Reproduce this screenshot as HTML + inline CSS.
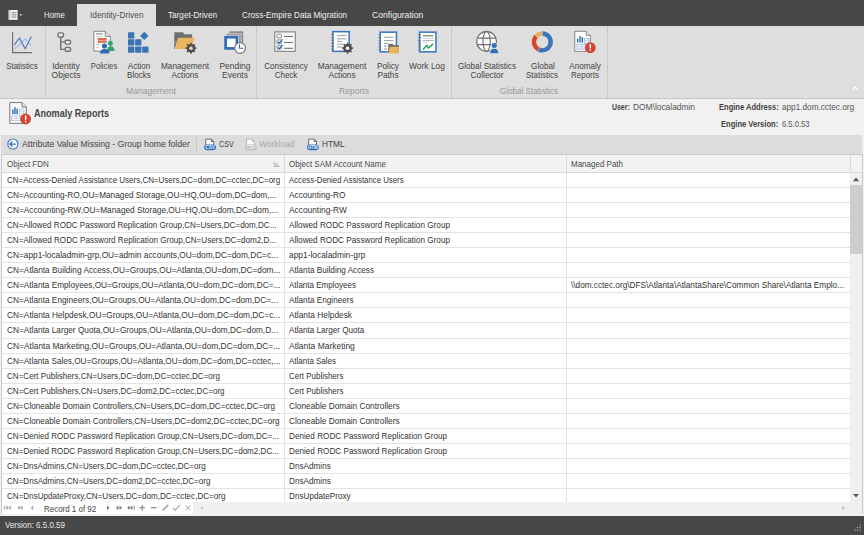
<!DOCTYPE html>
<html><head><meta charset="utf-8"><style>
html,body{margin:0;padding:0;width:864px;height:535px;overflow:hidden;background:#f1f1f1;}
body{position:relative;font-family:"Liberation Sans",sans-serif;}
.t{position:absolute;white-space:nowrap;line-height:1;}
.r{position:absolute;}
svg{position:absolute;left:0;top:0;}
</style></head><body>
<div class="r" style="left:0px;top:0px;width:864px;height:26px;background:#474747;"></div>
<div class="r" style="left:77px;top:4px;width:79px;height:22px;background:#dedede;"></div>
<div class="r" style="left:0px;top:26px;width:864px;height:72px;background:#dedede;"></div>
<div class="r" style="left:0px;top:98px;width:864px;height:1px;background:#c6c6c6;"></div>
<div class="r" style="left:45px;top:26px;width:1px;height:72px;background:#c9c9c9;"></div>
<div class="r" style="left:256px;top:26px;width:1px;height:72px;background:#c9c9c9;"></div>
<div class="r" style="left:451px;top:26px;width:1px;height:72px;background:#c9c9c9;"></div>
<div class="r" style="left:607px;top:26px;width:1px;height:72px;background:#c9c9c9;"></div>
<div class="r" style="left:1px;top:135px;width:861px;height:19px;background:#dcdcdc;"></div>
<div class="r" style="left:196px;top:137px;width:1px;height:15px;background:#c8c8c8;"></div>
<div class="r" style="left:1px;top:154px;width:862px;height:361px;background:#ffffff;box-sizing:border-box;border:1px solid #c9c9c9;"></div>
<div class="r" style="left:2px;top:155px;width:860px;height:17px;background:#f2f2f2;"></div>
<div class="r" style="left:2px;top:172px;width:860px;height:1px;background:#d9d9d9;"></div>
<div class="r" style="left:284px;top:155px;width:1px;height:17px;background:#d9d9d9;"></div>
<div class="r" style="left:566px;top:155px;width:1px;height:17px;background:#d9d9d9;"></div>
<div class="r" style="left:850px;top:155px;width:1px;height:17px;background:#d9d9d9;"></div>
<div class="r" style="left:850px;top:173px;width:12px;height:329px;background:#f0f0f0;"></div>
<div class="r" style="left:850px;top:185px;width:12px;height:69px;background:#cdcdcd;"></div>
<div class="r" style="left:193px;top:502px;width:669px;height:12px;background:#f0f0f0;"></div>
<div class="r" style="left:0px;top:514px;width:864px;height:2px;background:#f1f1f1;"></div>
<div class="r" style="left:0px;top:516px;width:864px;height:19px;background:#474747;"></div>
<div class="t" style="top:11px;font-size:8.6px;color:#f0f0f0;left:44.00px;transform-origin:0 0;transform:scaleX(0.9155);">Home</div>
<div class="t" style="top:11px;font-size:8.6px;color:#505050;left:90.00px;transform-origin:0 0;transform:scaleX(0.9656);">Identity-Driven</div>
<div class="t" style="top:11px;font-size:8.6px;color:#f0f0f0;left:168.20px;transform-origin:0 0;transform:scaleX(0.9497);">Target-Driven</div>
<div class="t" style="top:11px;font-size:8.6px;color:#f0f0f0;left:242.00px;transform-origin:0 0;transform:scaleX(0.9477);">Cross-Empire Data Migration</div>
<div class="t" style="top:11px;font-size:8.6px;color:#f0f0f0;left:372.00px;transform-origin:0 0;transform:scaleX(1.0034);">Configuration</div>
<div class="t" style="top:62px;font-size:8.6px;color:#444444;left:-127.70px;width:300px;text-align:center;transform:scaleX(0.9130);">Statistics</div>
<div class="t" style="top:62px;font-size:8.6px;color:#444444;left:-83.75px;width:300px;text-align:center;transform:scaleX(0.9921);">Identity</div>
<div class="t" style="top:71px;font-size:8.6px;color:#444444;left:-83.75px;width:300px;text-align:center;transform:scaleX(0.9921);">Objects</div>
<div class="t" style="top:62px;font-size:8.6px;color:#444444;left:-46.25px;width:300px;text-align:center;transform:scaleX(0.8945);">Policies</div>
<div class="t" style="top:62px;font-size:8.6px;color:#444444;left:-11.25px;width:300px;text-align:center;transform:scaleX(0.9418);">Action</div>
<div class="t" style="top:71px;font-size:8.6px;color:#444444;left:-11.25px;width:300px;text-align:center;transform:scaleX(0.9418);">Blocks</div>
<div class="t" style="top:62px;font-size:8.6px;color:#444444;left:35.00px;width:300px;text-align:center;transform:scaleX(0.9567);">Management</div>
<div class="t" style="top:71px;font-size:8.6px;color:#444444;left:35.00px;width:300px;text-align:center;transform:scaleX(0.9567);">Actions</div>
<div class="t" style="top:62px;font-size:8.6px;color:#444444;left:84.50px;width:300px;text-align:center;transform:scaleX(0.9827);">Pending</div>
<div class="t" style="top:71px;font-size:8.6px;color:#444444;left:84.50px;width:300px;text-align:center;transform:scaleX(0.9827);">Events</div>
<div class="t" style="top:62px;font-size:8.6px;color:#444444;left:135.75px;width:300px;text-align:center;transform:scaleX(0.9292);">Consistency</div>
<div class="t" style="top:71px;font-size:8.6px;color:#444444;left:135.75px;width:300px;text-align:center;transform:scaleX(0.9292);">Check</div>
<div class="t" style="top:62px;font-size:8.6px;color:#444444;left:191.75px;width:300px;text-align:center;transform:scaleX(0.9667);">Management</div>
<div class="t" style="top:71px;font-size:8.6px;color:#444444;left:191.75px;width:300px;text-align:center;transform:scaleX(0.9667);">Actions</div>
<div class="t" style="top:62px;font-size:8.6px;color:#444444;left:237.50px;width:300px;text-align:center;transform:scaleX(0.9591);">Policy</div>
<div class="t" style="top:71px;font-size:8.6px;color:#444444;left:237.50px;width:300px;text-align:center;transform:scaleX(0.9591);">Paths</div>
<div class="t" style="top:62px;font-size:8.6px;color:#444444;left:276.55px;width:300px;text-align:center;transform:scaleX(0.9802);">Work Log</div>
<div class="t" style="top:62px;font-size:8.6px;color:#444444;left:337.25px;width:300px;text-align:center;transform:scaleX(0.9396);">Global Statistics</div>
<div class="t" style="top:71px;font-size:8.6px;color:#444444;left:337.40px;width:300px;text-align:center;transform:scaleX(0.9728);">Collector</div>
<div class="t" style="top:62px;font-size:8.6px;color:#444444;left:392.50px;width:300px;text-align:center;transform:scaleX(0.9580);">Global</div>
<div class="t" style="top:71px;font-size:8.6px;color:#444444;left:392.35px;width:300px;text-align:center;transform:scaleX(0.9334);">Statistics</div>
<div class="t" style="top:62px;font-size:8.6px;color:#444444;left:434.55px;width:300px;text-align:center;transform:scaleX(0.9421);">Anomaly</div>
<div class="t" style="top:71px;font-size:8.6px;color:#444444;left:434.70px;width:300px;text-align:center;transform:scaleX(0.9238);">Reports</div>
<div class="t" style="top:87px;font-size:8.6px;color:#999999;left:0.90px;width:300px;text-align:center;transform:scaleX(0.9966);">Management</div>
<div class="t" style="top:87px;font-size:8.6px;color:#999999;left:203.50px;width:300px;text-align:center;transform:scaleX(0.9966);">Reports</div>
<div class="t" style="top:87px;font-size:8.6px;color:#999999;left:378.80px;width:300px;text-align:center;transform:scaleX(0.9460);">Global Statistics</div>
<div class="t" style="top:109px;font-size:10.0px;color:#444444;font-weight:700;left:34.00px;transform-origin:0 0;transform:scaleX(0.9058);">Anomaly Reports</div>
<div class="t" style="top:103px;font-size:8.4px;color:#444444;font-weight:700;left:611.60px;transform-origin:0 0;transform:scaleX(0.8263);">User:</div>
<div class="t" style="top:103px;font-size:8.6px;color:#555555;left:633.40px;transform-origin:0 0;transform:scaleX(0.9759);">DOM\localadmin</div>
<div class="t" style="top:103px;font-size:8.4px;color:#444444;font-weight:700;left:718.50px;transform-origin:0 0;transform:scaleX(0.9011);">Engine Address:</div>
<div class="t" style="top:103px;font-size:8.6px;color:#555555;left:782.00px;transform-origin:0 0;transform:scaleX(0.9538);">app1.dom.cctec.org</div>
<div class="t" style="top:120px;font-size:8.4px;color:#444444;font-weight:700;left:721.00px;transform-origin:0 0;transform:scaleX(0.9037);">Engine Version:</div>
<div class="t" style="top:120px;font-size:8.6px;color:#555555;left:782.00px;transform-origin:0 0;transform:scaleX(0.8853);">6.5.0.53</div>
<div class="t" style="top:140px;font-size:8.6px;color:#444444;left:21.60px;transform-origin:0 0;transform:scaleX(1.0075);">Attribute Value Missing - Group home folder</div>
<div class="t" style="top:140px;font-size:8.6px;color:#444444;left:218.70px;transform-origin:0 0;transform:scaleX(0.8431);">CSV</div>
<div class="t" style="top:140px;font-size:8.6px;color:#aaaaaa;left:259.40px;transform-origin:0 0;transform:scaleX(0.9846);">Workload</div>
<div class="t" style="top:140px;font-size:8.6px;color:#444444;left:321.90px;transform-origin:0 0;transform:scaleX(0.9698);">HTML</div>
<div class="t" style="top:160px;font-size:8.6px;color:#4a4a4a;left:7.00px;transform-origin:0 0;transform:scaleX(0.9300);">Object FDN</div>
<div class="t" style="top:160px;font-size:8.6px;color:#4a4a4a;left:289.00px;transform-origin:0 0;transform:scaleX(0.9300);">Object SAM Account Name</div>
<div class="t" style="top:160px;font-size:8.6px;color:#4a4a4a;left:571.00px;transform-origin:0 0;transform:scaleX(0.9300);">Managed Path</div>
<div class="t" style="top:505px;font-size:8.6px;color:#444444;left:44.00px;transform-origin:0 0;transform:scaleX(0.9259);">Record 1 of 92</div>
<div class="t" style="top:521px;font-size:8.6px;color:#e8e8e8;left:5.00px;transform-origin:0 0;transform:scaleX(0.9302);">Version: 6.5.0.59</div>
<div class="r" style="left:2px;top:173px;width:848px;height:329px;overflow:hidden;">
<div class="r" style="left:0px;top:14px;width:848px;height:1px;background:#e3e3e3;"></div>
<div class="r" style="left:0px;top:29px;width:848px;height:1px;background:#e3e3e3;"></div>
<div class="r" style="left:0px;top:44px;width:848px;height:1px;background:#e3e3e3;"></div>
<div class="r" style="left:0px;top:59px;width:848px;height:1px;background:#e3e3e3;"></div>
<div class="r" style="left:0px;top:74px;width:848px;height:1px;background:#e3e3e3;"></div>
<div class="r" style="left:0px;top:89px;width:848px;height:1px;background:#e3e3e3;"></div>
<div class="r" style="left:0px;top:104px;width:848px;height:1px;background:#e3e3e3;"></div>
<div class="r" style="left:0px;top:119px;width:848px;height:1px;background:#e3e3e3;"></div>
<div class="r" style="left:0px;top:134px;width:848px;height:1px;background:#e3e3e3;"></div>
<div class="r" style="left:0px;top:149px;width:848px;height:1px;background:#e3e3e3;"></div>
<div class="r" style="left:0px;top:165px;width:848px;height:1px;background:#e3e3e3;"></div>
<div class="r" style="left:0px;top:180px;width:848px;height:1px;background:#e3e3e3;"></div>
<div class="r" style="left:0px;top:195px;width:848px;height:1px;background:#e3e3e3;"></div>
<div class="r" style="left:0px;top:210px;width:848px;height:1px;background:#e3e3e3;"></div>
<div class="r" style="left:0px;top:225px;width:848px;height:1px;background:#e3e3e3;"></div>
<div class="r" style="left:0px;top:240px;width:848px;height:1px;background:#e3e3e3;"></div>
<div class="r" style="left:0px;top:255px;width:848px;height:1px;background:#e3e3e3;"></div>
<div class="r" style="left:0px;top:270px;width:848px;height:1px;background:#e3e3e3;"></div>
<div class="r" style="left:0px;top:285px;width:848px;height:1px;background:#e3e3e3;"></div>
<div class="r" style="left:0px;top:300px;width:848px;height:1px;background:#e3e3e3;"></div>
<div class="r" style="left:0px;top:315px;width:848px;height:1px;background:#e3e3e3;"></div>
<div class="r" style="left:0px;top:330px;width:848px;height:1px;background:#e3e3e3;"></div>
<div class="r" style="left:282px;top:0px;width:1px;height:329px;background:#e3e3e3;"></div>
<div class="r" style="left:564px;top:0px;width:1px;height:329px;background:#e3e3e3;"></div>
<div class="t" style="top:3px;font-size:8.6px;color:#333333;left:4.80px;transform-origin:0 0;transform:scaleX(0.9279);">CN=Access-Denied Assistance Users,CN=Users,DC=dom,DC=cctec,DC=org</div>
<div class="t" style="top:3px;font-size:8.6px;color:#333333;left:287.00px;transform-origin:0 0;transform:scaleX(0.9089);">Access-Denied Assistance Users</div>
<div class="t" style="top:18px;font-size:8.6px;color:#333333;left:4.80px;transform-origin:0 0;transform:scaleX(0.9600);">CN=Accounting-RO,OU=Managed Storage,OU=HQ,OU=dom,DC=dom,...</div>
<div class="t" style="top:18px;font-size:8.6px;color:#333333;left:287.00px;transform-origin:0 0;transform:scaleX(0.9679);">Accounting-RO</div>
<div class="t" style="top:33px;font-size:8.6px;color:#333333;left:4.80px;transform-origin:0 0;transform:scaleX(0.9630);">CN=Accounting-RW,OU=Managed Storage,OU=HQ,OU=dom,DC=dom,...</div>
<div class="t" style="top:33px;font-size:8.6px;color:#333333;left:287.00px;transform-origin:0 0;transform:scaleX(0.9707);">Accounting-RW</div>
<div class="t" style="top:48px;font-size:8.6px;color:#333333;left:4.80px;transform-origin:0 0;transform:scaleX(0.9378);">CN=Allowed RODC Password Replication Group,CN=Users,DC=dom,DC...</div>
<div class="t" style="top:48px;font-size:8.6px;color:#333333;left:287.00px;transform-origin:0 0;transform:scaleX(0.9521);">Allowed RODC Password Replication Group</div>
<div class="t" style="top:63px;font-size:8.6px;color:#333333;left:4.80px;transform-origin:0 0;transform:scaleX(0.9418);">CN=Allowed RODC Password Replication Group,CN=Users,DC=dom2,D...</div>
<div class="t" style="top:63px;font-size:8.6px;color:#333333;left:287.00px;transform-origin:0 0;transform:scaleX(0.9521);">Allowed RODC Password Replication Group</div>
<div class="t" style="top:78px;font-size:8.6px;color:#333333;left:4.80px;transform-origin:0 0;transform:scaleX(0.9641);">CN=app1-localadmin-grp,OU=admin accounts,OU=dom,DC=dom,DC=c...</div>
<div class="t" style="top:78px;font-size:8.6px;color:#333333;left:287.00px;transform-origin:0 0;transform:scaleX(0.9752);">app1-localadmin-grp</div>
<div class="t" style="top:93px;font-size:8.6px;color:#333333;left:4.80px;transform-origin:0 0;transform:scaleX(0.9660);">CN=Atlanta Building Access,OU=Groups,OU=Atlanta,OU=dom,DC=dom...</div>
<div class="t" style="top:93px;font-size:8.6px;color:#333333;left:287.00px;transform-origin:0 0;transform:scaleX(0.9514);">Atlanta Building Access</div>
<div class="t" style="top:108px;font-size:8.6px;color:#333333;left:4.80px;transform-origin:0 0;transform:scaleX(0.9588);">CN=Atlanta Employees,OU=Groups,OU=Atlanta,OU=dom,DC=dom,DC=...</div>
<div class="t" style="top:108px;font-size:8.6px;color:#333333;left:287.00px;transform-origin:0 0;transform:scaleX(0.9351);">Atlanta Employees</div>
<div class="t" style="top:108px;font-size:8.6px;color:#333333;left:569.00px;transform-origin:0 0;transform:scaleX(0.9573);">\\dom.cctec.org\DFS\Atlanta\AtlantaShare\Common Share\Atlanta Emplo...</div>
<div class="t" style="top:123px;font-size:8.6px;color:#333333;left:4.80px;transform-origin:0 0;transform:scaleX(0.9632);">CN=Atlanta Engineers,OU=Groups,OU=Atlanta,OU=dom,DC=dom,DC=...</div>
<div class="t" style="top:123px;font-size:8.6px;color:#333333;left:287.00px;transform-origin:0 0;transform:scaleX(0.9522);">Atlanta Engineers</div>
<div class="t" style="top:138px;font-size:8.6px;color:#333333;left:4.80px;transform-origin:0 0;transform:scaleX(0.9662);">CN=Atlanta Helpdesk,OU=Groups,OU=Atlanta,OU=dom,DC=dom,DC=c...</div>
<div class="t" style="top:138px;font-size:8.6px;color:#333333;left:287.00px;transform-origin:0 0;transform:scaleX(0.9695);">Atlanta Helpdesk</div>
<div class="t" style="top:153px;font-size:8.6px;color:#333333;left:4.80px;transform-origin:0 0;transform:scaleX(0.9608);">CN=Atlanta Larger Quota,OU=Groups,OU=Atlanta,OU=dom,DC=dom,D...</div>
<div class="t" style="top:153px;font-size:8.6px;color:#333333;left:287.00px;transform-origin:0 0;transform:scaleX(0.9449);">Atlanta Larger Quota</div>
<div class="t" style="top:169px;font-size:8.6px;color:#333333;left:4.80px;transform-origin:0 0;transform:scaleX(0.9744);">CN=Atlanta Marketing,OU=Groups,OU=Atlanta,OU=dom,DC=dom,DC=...</div>
<div class="t" style="top:169px;font-size:8.6px;color:#333333;left:287.00px;transform-origin:0 0;transform:scaleX(0.9839);">Atlanta Marketing</div>
<div class="t" style="top:184px;font-size:8.6px;color:#333333;left:4.80px;transform-origin:0 0;transform:scaleX(0.9540);">CN=Atlanta Sales,OU=Groups,OU=Atlanta,OU=dom,DC=dom,DC=cctec,...</div>
<div class="t" style="top:184px;font-size:8.6px;color:#333333;left:287.00px;transform-origin:0 0;transform:scaleX(0.9282);">Atlanta Sales</div>
<div class="t" style="top:199px;font-size:8.6px;color:#333333;left:4.80px;transform-origin:0 0;transform:scaleX(0.9379);">CN=Cert Publishers,CN=Users,DC=dom,DC=cctec,DC=org</div>
<div class="t" style="top:199px;font-size:8.6px;color:#333333;left:287.00px;transform-origin:0 0;transform:scaleX(0.9260);">Cert Publishers</div>
<div class="t" style="top:214px;font-size:8.6px;color:#333333;left:4.80px;transform-origin:0 0;transform:scaleX(0.9384);">CN=Cert Publishers,CN=Users,DC=dom2,DC=cctec,DC=org</div>
<div class="t" style="top:214px;font-size:8.6px;color:#333333;left:287.00px;transform-origin:0 0;transform:scaleX(0.9260);">Cert Publishers</div>
<div class="t" style="top:229px;font-size:8.6px;color:#333333;left:4.80px;transform-origin:0 0;transform:scaleX(0.9470);">CN=Cloneable Domain Controllers,CN=Users,DC=dom,DC=cctec,DC=org</div>
<div class="t" style="top:229px;font-size:8.6px;color:#333333;left:287.00px;transform-origin:0 0;transform:scaleX(0.9648);">Cloneable Domain Controllers</div>
<div class="t" style="top:244px;font-size:8.6px;color:#333333;left:4.80px;transform-origin:0 0;transform:scaleX(0.9473);">CN=Cloneable Domain Controllers,CN=Users,DC=dom2,DC=cctec,DC=org</div>
<div class="t" style="top:244px;font-size:8.6px;color:#333333;left:287.00px;transform-origin:0 0;transform:scaleX(0.9648);">Cloneable Domain Controllers</div>
<div class="t" style="top:259px;font-size:8.6px;color:#333333;left:4.80px;transform-origin:0 0;transform:scaleX(0.9398);">CN=Denied RODC Password Replication Group,CN=Users,DC=dom,DC=...</div>
<div class="t" style="top:259px;font-size:8.6px;color:#333333;left:287.00px;transform-origin:0 0;transform:scaleX(0.9506);">Denied RODC Password Replication Group</div>
<div class="t" style="top:274px;font-size:8.6px;color:#333333;left:4.80px;transform-origin:0 0;transform:scaleX(0.9406);">CN=Denied RODC Password Replication Group,CN=Users,DC=dom2,DC...</div>
<div class="t" style="top:274px;font-size:8.6px;color:#333333;left:287.00px;transform-origin:0 0;transform:scaleX(0.9506);">Denied RODC Password Replication Group</div>
<div class="t" style="top:289px;font-size:8.6px;color:#333333;left:4.80px;transform-origin:0 0;transform:scaleX(0.9356);">CN=DnsAdmins,CN=Users,DC=dom,DC=cctec,DC=org</div>
<div class="t" style="top:289px;font-size:8.6px;color:#333333;left:287.00px;transform-origin:0 0;transform:scaleX(0.9515);">DnsAdmins</div>
<div class="t" style="top:304px;font-size:8.6px;color:#333333;left:4.80px;transform-origin:0 0;transform:scaleX(0.9371);">CN=DnsAdmins,CN=Users,DC=dom2,DC=cctec,DC=org</div>
<div class="t" style="top:304px;font-size:8.6px;color:#333333;left:287.00px;transform-origin:0 0;transform:scaleX(0.9515);">DnsAdmins</div>
<div class="t" style="top:319px;font-size:8.6px;color:#333333;left:4.80px;transform-origin:0 0;transform:scaleX(0.9387);">CN=DnsUpdateProxy,CN=Users,DC=dom,DC=cctec,DC=org</div>
<div class="t" style="top:319px;font-size:8.6px;color:#333333;left:287.00px;transform-origin:0 0;transform:scaleX(0.9486);">DnsUpdateProxy</div>
</div>
<svg width="864" height="535" viewBox="0 0 864 535">
<rect x="8.7" y="10" width="8.9" height="9.8" fill="#f4f4f4"/>
<rect x="8.7" y="10" width="2.6" height="9.8" fill="#d8d8d8"/>
<rect x="11.8" y="12.0" width="4.6" height="1.3" fill="#9a9a9a"/>
<rect x="11.8" y="14.2" width="4.6" height="1.3" fill="#9a9a9a"/>
<rect x="11.8" y="16.4" width="4.6" height="1.3" fill="#9a9a9a"/>
<path d="M19,14.3 L22.7,14.3 L20.85,16.3 Z" fill="#bdbdbd"/>
<path d="M12.6,32.2 V52.6 H32" fill="none" stroke="#6b6b6b" stroke-width="1.1"/>
<path d="M14.2,49.2 L25.4,39 L30.9,45.3" fill="none" stroke="#9dbde6" stroke-width="1.1"/>
<path d="M14.2,44.8 L19.4,38.2 L25.2,48.7 L31.4,36.4" fill="none" stroke="#4f7fbf" stroke-width="1.2"/>
<path d="M60.7,37.4 V49.4 H64.7 M60.7,41.9 H64.7" fill="none" stroke="#707070" stroke-width="1.4"/>
<rect x="58.0" y="32.900000000000006" width="5.500000000000005" height="4.1" rx="1.3" fill="#ececec" stroke="#707070" stroke-width="1.4"/>
<rect x="65.10000000000001" y="40.2" width="5.399999999999997" height="3.8999999999999972" rx="1.3" fill="#ececec" stroke="#707070" stroke-width="1.4"/>
<rect x="65.10000000000001" y="47.5" width="5.399999999999997" height="3.7000000000000015" rx="1.3" fill="#ececec" stroke="#707070" stroke-width="1.4"/>
<path d="M93.9,31.3 H105.3 L110.4,36.4 V51.2 H93.9 Z" fill="#fbfbfb" stroke="#7a7a7a" stroke-width="0.9"/>
<path d="M105.3,31.3 V36.4 H110.4" fill="#e6e6e6" stroke="#7a7a7a" stroke-width="0.9"/>
<rect x="96" y="33.3" width="6.5" height="1.3" fill="#9a9a9a"/>
<rect x="96" y="36" width="6" height="0.6" fill="#b0b0b0"/>
<path d="M97.2,38 H107.1 L106.2,40.3 L107.1,42.7 H97.2 L98.1,40.3 Z" fill="#dd6a55"/>
<rect x="98.6" y="40" width="7" height="0.8" fill="#f2b5a8"/>
<rect x="96" y="44.3" width="4" height="0.6" fill="#a0a0a0"/>
<rect x="96" y="46.8" width="3" height="0.6" fill="#a0a0a0"/>
<circle cx="110.3" cy="43.2" r="2.5" fill="#34a56f"/>
<path d="M107,51 Q107,46.2 110.3,46.2 Q114.6,46.2 114.6,51 Z" fill="#34a56f"/>
<circle cx="104.5" cy="46" r="2.6" fill="#2f6cb3"/>
<path d="M100,53.6 Q100,49 104.5,49 Q109.3,49 109.3,53.6 Z" fill="#2f6cb3"/>
<rect x="128" y="32.2" width="6.3" height="6.2" rx="0.6" fill="#3b73b6"/>
<rect x="128" y="39.3" width="6.3" height="6.2" rx="0.6" fill="#3b73b6"/>
<rect x="135.1" y="39.3" width="6.3" height="6.2" rx="0.6" fill="#3b73b6"/>
<rect x="128" y="46.6" width="6.3" height="6.2" rx="0.6" fill="#3b73b6"/>
<rect x="135.1" y="46.6" width="6.3" height="6.2" rx="0.6" fill="#3b73b6"/>
<rect x="142.2" y="46.6" width="6.3" height="6.2" rx="0.6" fill="#3b73b6"/>
<path d="M144.3,31.7 L148.5,35.9 L144.3,40.1 L140.1,35.9 Z" fill="#3b73b6"/>
<path d="M174.3,48.4 V32.2 H182.9 L184.5,34.3 H192.1 V40 H176 Z" fill="#6e6e6e"/>
<path d="M177.4,37.7 H194.4 L191.5,48.9 H175.9 Z" fill="#e9b45d"/>
<path d="M174.3,48.9 L177.4,37.7" stroke="#6e6e6e" stroke-width="1"/>
<path d="M190.14,43.88 L190.34,42.64 L191.66,42.64 L191.86,43.88 L193.44,44.54 L194.47,43.80 L195.40,44.73 L194.66,45.76 L195.32,47.34 L196.56,47.54 L196.56,48.86 L195.32,49.06 L194.66,50.64 L195.40,51.67 L194.47,52.60 L193.44,51.86 L191.86,52.52 L191.66,53.76 L190.34,53.76 L190.14,52.52 L188.56,51.86 L187.53,52.60 L186.60,51.67 L187.34,50.64 L186.68,49.06 L185.44,48.86 L185.44,47.54 L186.68,47.34 L187.34,45.76 L186.60,44.73 L187.53,43.80 L188.56,44.54Z" fill="#505050"/>
<circle cx="191" cy="48.2" r="1.7" fill="#f0dcb8"/>
<path d="M229.3,32.1 H242.3 V44.3" fill="none" stroke="#8e8e8e" stroke-width="1.8"/>
<path d="M226.7,34.3 H239.9 V45.5" fill="none" stroke="#9c9c9c" stroke-width="1.8"/>
<rect x="225.6" y="37.2" width="11.3" height="11.2" fill="#ffffff" stroke="#2f6db5" stroke-width="2.7"/>
<circle cx="240.1" cy="48" r="5.4" fill="#ffffff" stroke="#767676" stroke-width="1.2"/>
<path d="M239.5,44.2 V48.3 H243.3" fill="none" stroke="#2f6db5" stroke-width="1.1"/>
<rect x="274.8" y="31.9" width="20.4" height="19.4" fill="#f9f9f9" stroke="#767676" stroke-width="1"/>
<rect x="276.9" y="34.199999999999996" width="4.6" height="3.7" rx="0.5" fill="#f4f4f4" stroke="#8a8a8a" stroke-width="0.9"/>
<rect x="276.9" y="39.9" width="4.6" height="3.7" rx="0.5" fill="#f4f4f4" stroke="#8a8a8a" stroke-width="0.9"/>
<rect x="276.9" y="45.4" width="4.6" height="3.7" rx="0.5" fill="#f4f4f4" stroke="#8a8a8a" stroke-width="0.9"/>
<path d="M284,36.5 H292.9" stroke="#6a6a6a" stroke-width="1"/>
<path d="M284,42.4 H292.9" stroke="#6a6a6a" stroke-width="1"/>
<path d="M284,48.3 H292.9" stroke="#6a6a6a" stroke-width="1"/>
<path d="M277.7,41.7 L279.2,43.1 L282.6,39.4" fill="none" stroke="#2e72c0" stroke-width="1.3"/>
<path d="M277.7,47.4 L279.2,48.8 L282.6,45.099999999999994" fill="none" stroke="#2e72c0" stroke-width="1.3"/>
<rect x="332.85" y="31.65" width="16.299999999999955" height="19.700000000000003" fill="#ffffff" stroke="#3575c0" stroke-width="1.5"/>
<rect x="331.1" y="33.6" width="2.6" height="1" fill="#8a8a8a"/>
<circle cx="333.0" cy="34.1" r="0.7" fill="#2b64a8"/>
<rect x="331.1" y="36.64" width="2.6" height="1" fill="#8a8a8a"/>
<circle cx="333.0" cy="37.14" r="0.7" fill="#2b64a8"/>
<rect x="331.1" y="39.68" width="2.6" height="1" fill="#8a8a8a"/>
<circle cx="333.0" cy="40.18" r="0.7" fill="#2b64a8"/>
<rect x="331.1" y="42.72" width="2.6" height="1" fill="#8a8a8a"/>
<circle cx="333.0" cy="43.22" r="0.7" fill="#2b64a8"/>
<rect x="331.1" y="45.760000000000005" width="2.6" height="1" fill="#8a8a8a"/>
<circle cx="333.0" cy="46.260000000000005" r="0.7" fill="#2b64a8"/>
<rect x="331.1" y="48.800000000000004" width="2.6" height="1" fill="#8a8a8a"/>
<circle cx="333.0" cy="49.300000000000004" r="0.7" fill="#2b64a8"/>
<rect x="337" y="35.050000000000004" width="9.5" height="1.1" fill="#a2a2a2"/>
<rect x="337" y="38.25" width="9.5" height="1.1" fill="#a2a2a2"/>
<rect x="337" y="40.85" width="5" height="1.1" fill="#a2a2a2"/>
<rect x="337" y="43.650000000000006" width="6" height="1.1" fill="#a2a2a2"/>
<rect x="337" y="46.45" width="5" height="1.1" fill="#a2a2a2"/>
<path d="M346.74,43.88 L346.94,42.64 L348.26,42.64 L348.46,43.88 L350.04,44.54 L351.07,43.80 L352.00,44.73 L351.26,45.76 L351.92,47.34 L353.16,47.54 L353.16,48.86 L351.92,49.06 L351.26,50.64 L352.00,51.67 L351.07,52.60 L350.04,51.86 L348.46,52.52 L348.26,53.76 L346.94,53.76 L346.74,52.52 L345.16,51.86 L344.13,52.60 L343.20,51.67 L343.94,50.64 L343.28,49.06 L342.04,48.86 L342.04,47.54 L343.28,47.34 L343.94,45.76 L343.20,44.73 L344.13,43.80 L345.16,44.54Z" fill="#4f4f4f"/>
<circle cx="347.6" cy="48.2" r="1.7" fill="#ffffff"/>
<rect x="380.15" y="32.15" width="16.30000000000001" height="19.700000000000003" fill="#ffffff" stroke="#3575c0" stroke-width="1.5"/>
<rect x="378.4" y="34.1" width="2.6" height="1" fill="#8a8a8a"/>
<circle cx="380.29999999999995" cy="34.6" r="0.7" fill="#2b64a8"/>
<rect x="378.4" y="37.14" width="2.6" height="1" fill="#8a8a8a"/>
<circle cx="380.29999999999995" cy="37.64" r="0.7" fill="#2b64a8"/>
<rect x="378.4" y="40.18" width="2.6" height="1" fill="#8a8a8a"/>
<circle cx="380.29999999999995" cy="40.68" r="0.7" fill="#2b64a8"/>
<rect x="378.4" y="43.22" width="2.6" height="1" fill="#8a8a8a"/>
<circle cx="380.29999999999995" cy="43.72" r="0.7" fill="#2b64a8"/>
<rect x="378.4" y="46.260000000000005" width="2.6" height="1" fill="#8a8a8a"/>
<circle cx="380.29999999999995" cy="46.760000000000005" r="0.7" fill="#2b64a8"/>
<rect x="378.4" y="49.300000000000004" width="2.6" height="1" fill="#8a8a8a"/>
<circle cx="380.29999999999995" cy="49.800000000000004" r="0.7" fill="#2b64a8"/>
<rect x="384" y="36.75" width="9.5" height="1.1" fill="#a8a8a8"/>
<rect x="384" y="40.050000000000004" width="9.5" height="1.1" fill="#a8a8a8"/>
<rect x="384" y="42.85" width="4" height="1.1" fill="#a8a8a8"/>
<rect x="384" y="45.650000000000006" width="3" height="1.1" fill="#a8a8a8"/>
<rect x="384" y="48.45" width="3" height="1.1" fill="#a8a8a8"/>
<path d="M388.3,52 V43.7 H392.5 L393.5,45 H398.8 V52 Z" fill="#6e6e6e"/>
<path d="M389.8,46.8 H398.8 V53.6 H388.8 Z" fill="#e9b45d"/>
<rect x="419.65" y="32.15" width="16.30000000000001" height="19.700000000000003" fill="#ffffff" stroke="#3575c0" stroke-width="1.5"/>
<rect x="417.9" y="34.1" width="2.6" height="1" fill="#8a8a8a"/>
<circle cx="419.79999999999995" cy="34.6" r="0.7" fill="#2b64a8"/>
<rect x="417.9" y="37.14" width="2.6" height="1" fill="#8a8a8a"/>
<circle cx="419.79999999999995" cy="37.64" r="0.7" fill="#2b64a8"/>
<rect x="417.9" y="40.18" width="2.6" height="1" fill="#8a8a8a"/>
<circle cx="419.79999999999995" cy="40.68" r="0.7" fill="#2b64a8"/>
<rect x="417.9" y="43.22" width="2.6" height="1" fill="#8a8a8a"/>
<circle cx="419.79999999999995" cy="43.72" r="0.7" fill="#2b64a8"/>
<rect x="417.9" y="46.260000000000005" width="2.6" height="1" fill="#8a8a8a"/>
<circle cx="419.79999999999995" cy="46.760000000000005" r="0.7" fill="#2b64a8"/>
<rect x="417.9" y="49.300000000000004" width="2.6" height="1" fill="#8a8a8a"/>
<circle cx="419.79999999999995" cy="49.800000000000004" r="0.7" fill="#2b64a8"/>
<rect x="423" y="35.1" width="10.2" height="1.4" fill="#8a8a8a"/>
<rect x="422.7" y="38.1" width="11" height="0.8" fill="#c8c8c8"/>
<rect x="422.7" y="40" width="11" height="0.9" fill="#b0b0b0"/>
<rect x="422.7" y="41.7" width="6" height="0.7" fill="#c8c8c8"/>
<path d="M423.4,49.1 L426.8,45.4 L428.4,48.2 L432.6,44.4" fill="none" stroke="#25a15e" stroke-width="1.5" stroke-linejoin="round" stroke-linecap="round"/>
<circle cx="486.6" cy="41.4" r="9.9" fill="#ffffff" stroke="#6f6f6f" stroke-width="1.3"/>
<ellipse cx="486.6" cy="41.4" rx="3.6" ry="9.9" fill="none" stroke="#6f6f6f" stroke-width="1.2"/>
<path d="M477.4,38.2 H495.8 M477.4,44.7 H495.8" stroke="#6f6f6f" stroke-width="1.2"/>
<circle cx="494.3" cy="46" r="3.6" fill="#dedede"/>
<path d="M489.2,54 Q489.2,48.2 494.2,48.2 Q499.4,48.2 499.4,54 Z" fill="#dedede"/>
<circle cx="494.3" cy="45.4" r="2.5" fill="#2f6fb8"/>
<path d="M490.2,53.2 Q490.2,48.8 494.2,48.8 Q498.2,48.8 498.2,53.2 Z" fill="#2f6fb8"/>
<path d="M542.67,31.31 A10.6,10.6 0 1 1 538.16,51.66 L539.88,47.61 A6.2,6.2 0 1 0 542.52,35.70 Z" fill="#3b75ba"/>
<path d="M537.65,51.43 A10.6,10.6 0 0 1 534.42,34.81 L537.69,37.75 A6.2,6.2 0 0 0 539.58,47.47 Z" fill="#d2492c"/>
<path d="M534.80,34.40 A10.6,10.6 0 0 1 541.93,31.31 L542.08,35.70 A6.2,6.2 0 0 0 537.92,37.52 Z" fill="#e9b15c"/>
<path d="M574.8,31.3 H586.3 L590.4,35.4 V51.4 H574.8 Z" fill="#fdfdfd" stroke="#7a7a7a" stroke-width="0.9"/>
<path d="M586.3,31.3 V35.4 H590.4" fill="#eeeeee" stroke="#7a7a7a" stroke-width="0.9"/>
<rect x="577" y="38.8" width="1.4" height="3.8" fill="#2f6db4"/>
<rect x="579.3" y="36" width="1.4" height="6.6" fill="#2f6db4"/>
<rect x="581.6" y="37.3" width="1.4" height="5.3" fill="#2f6db4"/>
<rect x="584.2" y="38.3" width="4.6" height="5.5" fill="none" stroke="#9ab6dc" stroke-width="0.8"/>
<path d="M584.2,40.2 H588.8 M584.2,42 H588.8" stroke="#9ab6dc" stroke-width="0.6"/>
<rect x="577" y="44.3" width="9" height="4.8" fill="none" stroke="#9ab6dc" stroke-width="0.8"/>
<path d="M577,46.7 H586 M581.5,44.3 V49.1" stroke="#9ab6dc" stroke-width="0.6"/>
<circle cx="590.3" cy="47.6" r="5.4" fill="#d2452f"/>
<rect x="589.6" y="44.1" width="1.4" height="4.3" fill="#ffffff"/>
<rect x="589.6" y="49.3" width="1.4" height="1.4" fill="#ffffff"/>
<path d="M9.8,102.6 H22 L26.3,106.9 V123.4 H9.8 Z" fill="#fdfdfd" stroke="#757575" stroke-width="1"/>
<path d="M22,102.6 V106.9 H26.3" fill="#eeeeee" stroke="#757575" stroke-width="1"/>
<rect x="12.1" y="109.5" width="1.5" height="4.8" fill="#3a78c0"/>
<rect x="14.2" y="107.2" width="1.5" height="7.1" fill="#3a78c0"/>
<rect x="16.3" y="108.6" width="1.5" height="5.7" fill="#3a78c0"/>
<rect x="19.6" y="109" width="4.3" height="7" fill="none" stroke="#a9c1e3" stroke-width="0.8"/>
<path d="M19.6,111.3 H23.9 M19.6,113.6 H23.9" stroke="#a9c1e3" stroke-width="0.6"/>
<rect x="11.5" y="116.2" width="9.3" height="4.4" fill="none" stroke="#a9c1e3" stroke-width="0.8"/>
<path d="M11.5,118.4 H20.8 M16.1,116.2 V120.6" stroke="#a9c1e3" stroke-width="0.6"/>
<circle cx="25.6" cy="119" r="5.4" fill="#d2452f"/>
<rect x="24.9" y="115.4" width="1.5" height="4.4" fill="#ffffff"/>
<rect x="24.9" y="120.7" width="1.5" height="1.5" fill="#ffffff"/>
<circle cx="12.9" cy="144.1" r="5.1" fill="#ffffff" stroke="#3a78c0" stroke-width="1.1"/>
<path d="M16,144.1 H10.2 M12.4,141.6 L9.9,144.1 L12.4,146.6" fill="none" stroke="#3a78c0" stroke-width="1.4"/>
<path d="M205.79999999999998,145 V139.1 H211.29999999999998 L213.7,141.5 V145" fill="#ffffff" stroke="#6a6a6a" stroke-width="1"/>
<path d="M211.29999999999998,139.1 V141.5 H213.7" fill="none" stroke="#6a6a6a" stroke-width="1"/>
<rect x="204.2" y="144.5" width="11.8" height="5.7" rx="2.85" fill="#2f6fbb"/>
<text x="210.1" y="149.1" font-family="Liberation Sans" font-size="4.6" font-weight="700" fill="#ffffff" text-anchor="middle" opacity="0.85">CSV</text>
<path d="M246.6,145 V139.1 H252.1 L254.5,141.5 V145" fill="#ffffff" stroke="#b5b5b5" stroke-width="1"/>
<path d="M252.1,139.1 V141.5 H254.5" fill="none" stroke="#b5b5b5" stroke-width="1"/>
<rect x="245" y="144.5" width="11.8" height="5.7" rx="2.85" fill="#bcbcbc"/>
<text x="250.9" y="149.1" font-family="Liberation Sans" font-size="4.6" font-weight="700" fill="#ffffff" text-anchor="middle" opacity="0.85">CSV</text>
<path d="M308.6,145 V139.1 H314.1 L316.5,141.5 V145" fill="#ffffff" stroke="#6a6a6a" stroke-width="1"/>
<path d="M314.1,139.1 V141.5 H316.5" fill="none" stroke="#6a6a6a" stroke-width="1"/>
<rect x="307" y="144.5" width="11.8" height="5.7" rx="2.85" fill="#2f6fbb"/>
<text x="312.9" y="149.1" font-family="Liberation Sans" font-size="4.6" font-weight="700" fill="#ffffff" text-anchor="middle" opacity="0.85">HTM</text>
<path d="M274.2,161.8 V166.4 H279.6" fill="none" stroke="#a0a0a0" stroke-width="0.8"/>
<path d="M275.6,163.4 H277 M275.6,165 H278.4" stroke="#a0a0a0" stroke-width="0.8"/>
<path d="M852.9,181.2 H859.1 L856,177.5 Z" fill="#5a5a5a"/>
<path d="M852.9,494 H859.1 L856,497.6 Z" fill="#5a5a5a"/>
<path d="M842,505.8 V510.2 L845.4,508 Z" fill="#c4c4c4"/>
<path d="M203.2,505.8 V510.2 L199.8,508 Z" fill="#cfcfcf"/>
<rect x="3.8" y="505.4" width="0.9" height="4.6" fill="#a6a6a6"/>
<path d="M5.2,507.7 L7.800000000000001,505.4 V510.0 Z" fill="#a6a6a6"/>
<path d="M8.2,507.7 L10.799999999999999,505.4 V510.0 Z" fill="#a6a6a6"/>
<path d="M17.2,507.7 L19.8,505.4 V510.0 Z" fill="#a6a6a6"/>
<path d="M20,507.7 L22.6,505.4 V510.0 Z" fill="#a6a6a6"/>
<path d="M30.6,507.7 L33.2,505.4 V510.0 Z" fill="#a6a6a6"/>
<path d="M109.6,507.7 L107,505.4 V510.0 Z" fill="#7a7a7a"/>
<path d="M119.3,507.7 L116.7,505.4 V510.0 Z" fill="#7a7a7a"/>
<path d="M122.1,507.7 L119.5,505.4 V510.0 Z" fill="#7a7a7a"/>
<path d="M130.4,507.7 L127.8,505.4 V510.0 Z" fill="#7a7a7a"/>
<path d="M133.2,507.7 L130.6,505.4 V510.0 Z" fill="#7a7a7a"/>
<rect x="133.7" y="505.4" width="0.9" height="4.6" fill="#7a7a7a"/>
<path d="M139.4,507.7 H145 M142.2,504.9 V510.5" stroke="#7a7a7a" stroke-width="1.1"/>
<path d="M150.8,507.7 H156.5" stroke="#7a7a7a" stroke-width="1.1"/>
<path d="M162.6,510.5 L168.2,504.8" stroke="#a6a6a6" stroke-width="1.7"/>
<path d="M172.9,507.9 L175.3,510.2 L180,504.9" fill="none" stroke="#a6a6a6" stroke-width="1.1"/>
<path d="M185.8,505.3 L190.4,510.09999999999997 M190.4,505.3 L185.8,510.09999999999997" stroke="#a6a6a6" stroke-width="1"/>
<path d="M852.7,89.9 L855.35,86.8 L858,89.9" fill="none" stroke="#ffffff" stroke-width="1.3"/>
<rect x="859.5" y="524.5" width="1.2" height="1.2" fill="#b0b0b0"/>
<rect x="857" y="527" width="1.2" height="1.2" fill="#b0b0b0"/>
<rect x="859.5" y="527" width="1.2" height="1.2" fill="#b0b0b0"/>
<rect x="854.5" y="529.5" width="1.2" height="1.2" fill="#b0b0b0"/>
<rect x="857" y="529.5" width="1.2" height="1.2" fill="#b0b0b0"/>
<rect x="859.5" y="529.5" width="1.2" height="1.2" fill="#b0b0b0"/>
</svg>
</body></html>
